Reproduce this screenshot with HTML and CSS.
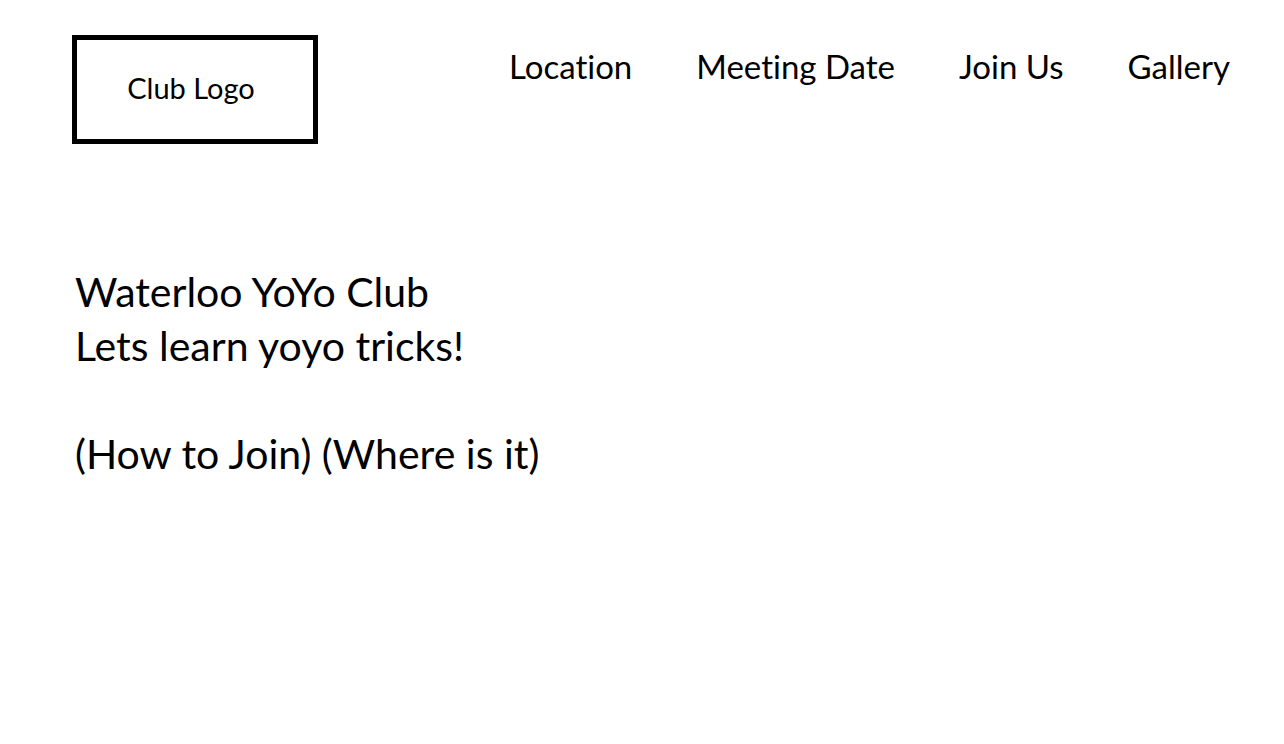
FILE: index.html
```html
<!DOCTYPE html>
<html lang="en">
<head>
<meta charset="utf-8">
<title>Waterloo YoYo Club</title>
<link rel="stylesheet" href="styles.css">
</head>
<body>
<header class="header">
  <div class="logo">Club Logo</div>
  <nav class="nav">
    <a class="nav-item" href="#location">Location</a>
    <a class="nav-item" href="#meeting">Meeting Date</a>
    <a class="nav-item" href="#join">Join Us</a>
    <a class="nav-item" href="#gallery">Gallery</a>
  </nav>
</header>
<main class="hero">
  <div class="hero-line">Waterloo YoYo Club</div>
  <div class="hero-line">Lets learn yoyo tricks!</div>
  <div class="hero-links">(How to Join) (Where is it)</div>
</main>
</body>
</html>
```

FILE: styles.css
```css
html, body {
  margin: 0;
  padding: 0;
  background: #ffffff;
  color: #000000;
  font-family: "Lato", "Open Sans", sans-serif;
  font-variant-ligatures: none;
}

.header {
  display: flex;
  justify-content: space-between;
  align-items: flex-start;
  padding: 35px 54px 0 72px;
}

.logo {
  box-sizing: border-box;
  width: 246px;
  height: 109px;
  border: 5px solid #000;
  display: flex;
  align-items: center;
  justify-content: center;
  font-size: 29px;
  padding: 0 8px 4px 0;
}

.nav {
  display: flex;
  gap: 64px;
  margin-top: 11px;
}

.nav-item {
  color: #000;
  text-decoration: none;
  font-size: 33px;
  line-height: 40px;
}

.hero {
  padding-left: 75px;
  margin-top: 121px;
  font-size: 41px;
  line-height: 54px;
}

.hero-links {
  margin-top: 54px;
}
```
